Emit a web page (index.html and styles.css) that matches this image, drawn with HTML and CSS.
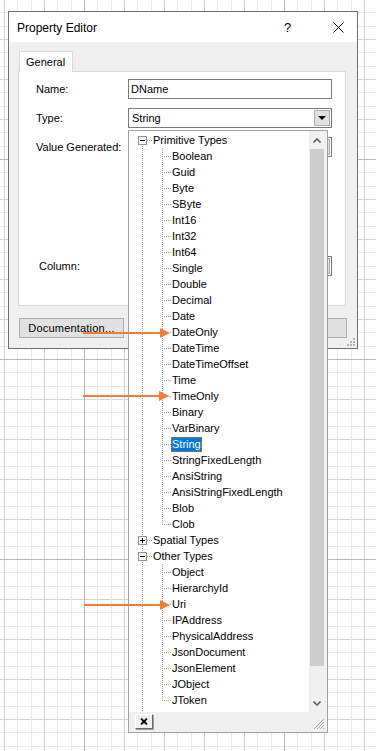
FILE: index.html
```html
<!DOCTYPE html>
<html>

	<head>
		<meta charset="UTF-8">
		<title>Property Editor</title>
		<link rel="stylesheet" href="styles.css">
	</head>

	<body>
		<div class="desk">
			<div class="dialog">
				<div class="titlebar">
					<span class="title">Property Editor</span>
					<span class="help">?</span>
					<span class="close">
						<svg width="11" height="11" viewBox="0 0 11 11"><path d="M0.5 0.5 L10.5 10.5 M10.5 0.5 L0.5 10.5" stroke="#000" stroke-width="1" fill="none"/></svg>
					</span>
				</div>
				<div class="dbody">
					<div class="tabs">
						<div class="tab">General</div>
					</div>
					<div class="panel">
						<div class="form">
							<label>Name:</label>
							<div class="textbox">DName</div>
							<label>Type:</label>
							<div class="combo">String<span class="drop"></span></div>
							<label>Value Generated:</label>
							<div class="combo"><span class="drop"></span></div>
							<label class="col">Column:</label>
							<div class="combo col"><span class="drop"></span></div>
						</div>
					</div>
					<div class="buttons">
						<button class="btn doc">Documentation...</button>
						<button class="btn ok">OK</button>
					</div>
				</div>
				<svg class="grip" width="9" height="9" viewBox="0 0 9 9">
					<rect x="6" y="0" width="2" height="2" fill="#b4b4b4"/>
					<rect x="3" y="3" width="2" height="2" fill="#b4b4b4"/>
					<rect x="6" y="3" width="2" height="2" fill="#b4b4b4"/>
					<rect x="0" y="6" width="2" height="2" fill="#b4b4b4"/>
					<rect x="3" y="6" width="2" height="2" fill="#b4b4b4"/>
					<rect x="6" y="6" width="2" height="2" fill="#b4b4b4"/>
				</svg>
			</div>

			<!-- выпадающий список типов -->
			<div class="popup">
				<div class="pmain">
					<div class="tree">
						<div class="row"><span class="cell rf"><span class="box minus"></span></span><span class="txt root">Primitive Types</span></div>
						<div class="row"><span class="cell rv"></span><span class="cell ct"></span><span class="txt">Boolean</span></div>
						<div class="row"><span class="cell rv"></span><span class="cell ct"></span><span class="txt">Guid</span></div>
						<div class="row"><span class="cell rv"></span><span class="cell ct"></span><span class="txt">Byte</span></div>
						<div class="row"><span class="cell rv"></span><span class="cell ct"></span><span class="txt">SByte</span></div>
						<div class="row"><span class="cell rv"></span><span class="cell ct"></span><span class="txt">Int16</span></div>
						<div class="row"><span class="cell rv"></span><span class="cell ct"></span><span class="txt">Int32</span></div>
						<div class="row"><span class="cell rv"></span><span class="cell ct"></span><span class="txt">Int64</span></div>
						<div class="row"><span class="cell rv"></span><span class="cell ct"></span><span class="txt">Single</span></div>
						<div class="row"><span class="cell rv"></span><span class="cell ct"></span><span class="txt">Double</span></div>
						<div class="row"><span class="cell rv"></span><span class="cell ct"></span><span class="txt">Decimal</span></div>
						<div class="row"><span class="cell rv"></span><span class="cell ct"></span><span class="txt">Date</span></div>
						<div class="row"><span class="cell rv"></span><span class="cell ct"></span><span class="txt">DateOnly</span></div>
						<div class="row"><span class="cell rv"></span><span class="cell ct"></span><span class="txt">DateTime</span></div>
						<div class="row"><span class="cell rv"></span><span class="cell ct"></span><span class="txt">DateTimeOffset</span></div>
						<div class="row"><span class="cell rv"></span><span class="cell ct"></span><span class="txt">Time</span></div>
						<div class="row"><span class="cell rv"></span><span class="cell ct"></span><span class="txt">TimeOnly</span></div>
						<div class="row"><span class="cell rv"></span><span class="cell ct"></span><span class="txt">Binary</span></div>
						<div class="row"><span class="cell rv"></span><span class="cell ct"></span><span class="txt">VarBinary</span></div>
						<div class="row"><span class="cell rv"></span><span class="cell ct"></span><span class="txt sel">String</span></div>
						<div class="row"><span class="cell rv"></span><span class="cell ct"></span><span class="txt">StringFixedLength</span></div>
						<div class="row"><span class="cell rv"></span><span class="cell ct"></span><span class="txt">AnsiString</span></div>
						<div class="row"><span class="cell rv"></span><span class="cell ct"></span><span class="txt">AnsiStringFixedLength</span></div>
						<div class="row"><span class="cell rv"></span><span class="cell ct"></span><span class="txt">Blob</span></div>
						<div class="row"><span class="cell rv"></span><span class="cell cl"></span><span class="txt">Clob</span></div>
						<div class="row"><span class="cell rm"><span class="box plus"></span></span><span class="txt root">Spatial Types</span></div>
						<div class="row"><span class="cell rm"><span class="box minus"></span></span><span class="txt root">Other Types</span></div>
						<div class="row"><span class="cell rv"></span><span class="cell ct"></span><span class="txt">Object</span></div>
						<div class="row"><span class="cell rv"></span><span class="cell ct"></span><span class="txt">HierarchyId</span></div>
						<div class="row"><span class="cell rv"></span><span class="cell ct"></span><span class="txt">Uri</span></div>
						<div class="row"><span class="cell rv"></span><span class="cell ct"></span><span class="txt">IPAddress</span></div>
						<div class="row"><span class="cell rv"></span><span class="cell ct"></span><span class="txt">PhysicalAddress</span></div>
						<div class="row"><span class="cell rv"></span><span class="cell ct"></span><span class="txt">JsonDocument</span></div>
						<div class="row"><span class="cell rv"></span><span class="cell ct"></span><span class="txt">JsonElement</span></div>
						<div class="row"><span class="cell rv"></span><span class="cell ct"></span><span class="txt">JObject</span></div>
						<div class="row"><span class="cell rv"></span><span class="cell cl"></span><span class="txt">JToken</span></div>
						<div class="row"><span class="cell rv"></span></div>
					</div>
					<div class="vscroll">
						<div class="sbtn">
							<svg width="8" height="5" viewBox="0 0 8 5"><polyline points="0.5,4.5 4,1 7.5,4.5" stroke="#606060" stroke-width="1.6" fill="none"/></svg>
						</div>
						<div class="thumb"></div>
						<div class="track"></div>
						<div class="sbtn">
							<svg width="8" height="5" viewBox="0 0 8 5"><polyline points="0.5,0.5 4,4 7.5,0.5" stroke="#606060" stroke-width="1.6" fill="none"/></svg>
						</div>
					</div>
				</div>
				<div class="pfoot">
					<span class="xbtn">
						<svg width="8" height="7" viewBox="0 0 8 7"><path d="M1 0.5 L7 6.5 M7 0.5 L1 6.5" stroke="#000" stroke-width="1.8" fill="none"/></svg>
					</span>
					<svg class="pgrip" width="12" height="12" viewBox="0 0 12 12">
						<path d="M11 1 L1 11 M11 4 L4 11 M11 7 L7 11 M11 10 L10 11" stroke="#a8a8a8" stroke-width="1" fill="none"/>
					</svg>
				</div>
			</div>

			<!-- стрелки -->
			<svg class="arrow a1" width="90" height="12" viewBox="0 0 90 12"><line x1="1" y1="6" x2="80" y2="6" stroke="#f57b3c" stroke-width="2"/><polygon points="78,1 88,6 78,11" fill="#f57b3c"/></svg>
			<svg class="arrow a2" width="90" height="12" viewBox="0 0 90 12"><line x1="2" y1="6" x2="80" y2="6" stroke="#f57b3c" stroke-width="2"/><polygon points="78,1 88,6 78,11" fill="#f57b3c"/></svg>
			<svg class="arrow a3" width="90" height="12" viewBox="0 0 90 12"><line x1="2" y1="6" x2="80" y2="6" stroke="#f57b3c" stroke-width="2"/><polygon points="78,1 88,6 78,11" fill="#f57b3c"/></svg>
		</div>
	</body>

</html>
```

FILE: styles.css
```css
* {
	box-sizing: border-box;
}

body {
	margin: 0;
	font-family: "Liberation Sans", Arial, sans-serif;
	font-size: 11px;
	color: #000;
}

/* фон с сеткой: крупные линии через 200, средние через 40, мелкие через 13/14 */
.desk {
	position: relative;
	width: 376px;
	height: 751px;
	overflow: hidden;
	background-color: #fff;
	background-image:
		linear-gradient(to right, #b8b8b8 1px, transparent 1px),
		linear-gradient(to bottom, #b8b8b8 1px, transparent 1px),
		linear-gradient(to right, #d4d4d4 0 1px, transparent 1px 13px, #e9e9e9 13px 14px, transparent 14px 27px, #e9e9e9 27px 28px, transparent 28px),
		linear-gradient(to bottom, #d4d4d4 0 1px, transparent 1px 13px, #e9e9e9 13px 14px, transparent 14px 27px, #e9e9e9 27px 28px, transparent 28px);
	background-size: 200px 200px, 200px 200px, 40px 40px, 40px 40px;
	background-position: 84px 159px, 84px 159px, 4px 39px, 4px 39px;
}

/* окно */
.dialog {
	position: absolute;
	left: 8px;
	top: 11px;
	width: 350px;
	height: 338px;
	border: 1px solid #6f6f6f;
	background: #f0f0f0;
	display: flex;
	flex-direction: column;
}

.titlebar {
	height: 30px;
	background: #fff;
	display: flex;
	align-items: center;
	padding-left: 8px;
	font-size: 12px;
}

.title {
	flex: 1;
	padding-top: 1px;
}

.help {
	width: 49px;
	font-size: 13px;
}

.close {
	width: 24px;
	display: flex;
	align-items: center;
	padding-top: 1px;
}

.dbody {
	flex: 1;
	padding: 9px 11px 10px 9px;
	display: flex;
	flex-direction: column;
}

.tabs {
	display: flex;
	height: 21px;
	margin-bottom: -1px;
	position: relative;
	z-index: 1;
}

.tab {
	margin-left: 1px;
	padding: 0 7px 0 6px;
	border: 1px solid #d9d9d9;
	border-bottom: none;
	background: #fff;
	line-height: 20px;
	height: 21px;
}

.panel {
	height: 235px;
	border: 1px solid #d9d9d9;
	background: #fff;
	padding: 7px 13px 0 17px;
}

.form {
	display: grid;
	grid-template-columns: 92px 204px;
	grid-template-rows: 20px 20px 20px 81px 20px;
	row-gap: 9px;
	align-items: center;
}

.form label.col {
	grid-area: 5 / 1;
	padding-left: 3px;
}

.form .combo.col {
	grid-area: 5 / 2;
}

.textbox {
	height: 20px;
	border: 1px solid #7a7a7a;
	background: #fff;
	line-height: 18px;
	padding-left: 2px;
}

.combo {
	height: 20px;
	border: 1px solid #7a7a7a;
	background: #fff;
	line-height: 18px;
	padding-left: 3px;
	display: flex;
	justify-content: space-between;
}

.drop {
	width: 16px;
	height: 16px;
	margin: 1px 1px 0 auto;
	background: #e1e1e1;
	border: 1px solid #adadad;
	display: flex;
	align-items: center;
	justify-content: center;
}

.drop::after {
	content: '';
	border-top: 4px solid #000;
	border-left: 4px solid transparent;
	border-right: 4px solid transparent;
}

.buttons {
	margin-top: 12px;
	height: 20px;
	display: flex;
	justify-content: space-between;
	padding-left: 1px;
}

.btn {
	height: 20px;
	background: #e1e1e1;
	border: 1px solid #adadad;
	font-family: "Liberation Sans", Arial, sans-serif;
	font-size: 11px;
	letter-spacing: 0.2px;
	color: #000;
	padding: 0;
}

.btn.doc {
	width: 105px;
}

.btn.ok {
	width: 75px;
	margin-right: -1px;
}

.grip {
	position: absolute;
	right: 1px;
	bottom: 1px;
}

/* выпадающий список */
.popup {
	position: absolute;
	left: 128px;
	top: 130px;
	width: 200px;
	height: 603px;
	border: 1px solid #a0a0a0;
	background: #f0f0f0;
	display: flex;
	flex-direction: column;
}

.pmain {
	height: 581px;
	display: flex;
}

.tree {
	width: 180px;
	background: #fff;
	padding: 1px 0 0 3px;
	overflow: hidden;
}

.row {
	display: flex;
	align-items: center;
	height: 16px;
	white-space: nowrap;
}

.cell {
	flex: none;
	width: 20px;
	height: 16px;
	display: flex;
	align-items: center;
}

/* пунктирные линии дерева */
.rv {
	background: repeating-linear-gradient(to bottom, #a0a0a0 0 1px, transparent 1px 2px) 10px 0 / 1px 16px no-repeat;
}

.rf {
	background:
		repeating-linear-gradient(to bottom, #a0a0a0 0 1px, transparent 1px 2px) 10px 8px / 1px 8px no-repeat,
		repeating-linear-gradient(to right, #a0a0a0 0 1px, transparent 1px 2px) 15px 8px / 5px 1px no-repeat;
}

.rm {
	background:
		repeating-linear-gradient(to bottom, #a0a0a0 0 1px, transparent 1px 2px) 10px 0 / 1px 16px no-repeat,
		repeating-linear-gradient(to right, #a0a0a0 0 1px, transparent 1px 2px) 15px 8px / 5px 1px no-repeat;
}

.ct {
	background:
		repeating-linear-gradient(to bottom, #a0a0a0 0 1px, transparent 1px 2px) 10px 0 / 1px 16px no-repeat,
		repeating-linear-gradient(to right, #a0a0a0 0 1px, transparent 1px 2px) 10px 8px / 9px 1px no-repeat;
}

.cl {
	background:
		repeating-linear-gradient(to bottom, #a0a0a0 0 1px, transparent 1px 2px) 10px 0 / 1px 9px no-repeat,
		repeating-linear-gradient(to right, #a0a0a0 0 1px, transparent 1px 2px) 10px 8px / 9px 1px no-repeat;
}

.box {
	width: 9px;
	height: 9px;
	margin: 1px 0 0 6px;
	border: 1px solid #919191;
	background: #fff;
	position: relative;
}

.box::before {
	content: '';
	position: absolute;
	left: 1px;
	top: 3px;
	width: 5px;
	height: 1px;
	background: #000;
}

.box.plus::after {
	content: '';
	position: absolute;
	left: 3px;
	top: 1px;
	width: 1px;
	height: 5px;
	background: #000;
}

.txt {
	line-height: 13px;
}

.txt.root {
	padding-left: 1px;
}

.txt.sel {
	margin-left: -1px;
	padding: 1px 1px;
	background: #0078d7;
	color: #fff;
	outline: 1px dotted #e07a10;
	outline-offset: -1px;
}

.vscroll {
	width: 17px;
	display: flex;
	flex-direction: column;
	background: #f0f0f0;
}

.sbtn {
	height: 18px;
	display: flex;
	align-items: center;
	justify-content: center;
	padding-right: 1px;
}

.thumb {
	height: 517px;
	margin: 0 2px 0 1px;
	background: #cdcdcd;
}

.track {
	flex: 1;
}

.pfoot {
	flex: 1;
	display: flex;
	justify-content: space-between;
	align-items: flex-start;
	padding: 2px 2px 0 6px;
}

.xbtn {
	width: 18px;
	height: 15px;
	border: 1px solid;
	border-color: #fff #696969 #696969 #fff;
	box-shadow: 1px 1px 0 #a0a0a0;
	display: flex;
	align-items: center;
	justify-content: center;
}

.pgrip {
	margin-top: 4px;
}

/* стрелки */
.arrow {
	position: absolute;
	left: 82px;
}

.a1 {
	top: 327px;
}

.a2 {
	top: 390px;
	left: 81px;
}

.a3 {
	top: 599px;
}
```
